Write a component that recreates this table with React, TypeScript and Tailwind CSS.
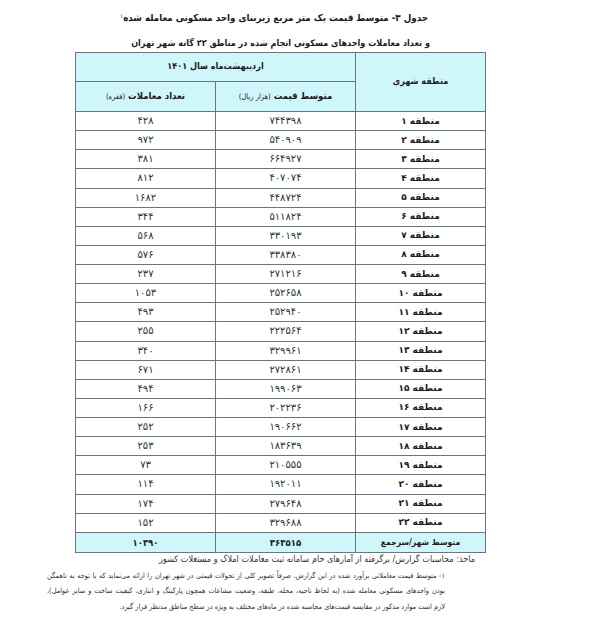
import React from "react";

const rows: [string, string, string][] = [
  ["۱", "۷۴۴۳۹۸", "۴۲۸"],
  ["۲", "۵۴۰۹۰۹", "۹۷۲"],
  ["۳", "۶۶۴۹۲۷", "۳۸۱"],
  ["۴", "۴۰۷۰۷۴", "۸۱۲"],
  ["۵", "۴۴۸۷۲۴", "۱۶۸۲"],
  ["۶", "۵۱۱۸۲۴", "۳۴۴"],
  ["۷", "۳۳۰۱۹۳", "۵۶۸"],
  ["۸", "۳۳۸۳۸۰", "۵۷۶"],
  ["۹", "۲۷۱۲۱۶", "۲۳۷"],
  ["۱۰", "۲۵۲۶۵۸", "۱۰۵۳"],
  ["۱۱", "۲۵۲۹۴۰", "۴۹۳"],
  ["۱۲", "۲۲۲۵۶۴", "۲۵۵"],
  ["۱۳", "۳۲۹۹۶۱", "۳۴۰"],
  ["۱۴", "۲۷۲۸۶۱", "۶۷۱"],
  ["۱۵", "۱۹۹۰۶۳", "۴۹۴"],
  ["۱۶", "۲۰۲۲۳۶", "۱۶۶"],
  ["۱۷", "۱۹۰۶۶۲", "۲۵۲"],
  ["۱۸", "۱۸۳۶۳۹", "۲۵۳"],
  ["۱۹", "۲۱۰۵۵۵", "۷۳"],
  ["۲۰", "۱۹۲۰۱۱", "۱۱۴"],
  ["۲۱", "۲۷۹۶۴۸", "۱۷۴"],
  ["۲۲", "۳۲۹۶۸۸", "۱۵۲"],
];

const cond = "font-['DejaVu_Sans_Condensed','DejaVu_Sans',sans-serif] font-stretch-condensed";
const reg = "font-['DejaVu_Sans',sans-serif]";
const bd = "border border-[#6a7679]";

export default function App() {
  return (
    <div dir="rtl" className={`w-[589px] h-[640px] bg-white text-[#1c1c1c] overflow-hidden ${reg}`}>
      <div className={`pt-[10px] pr-[161px] text-[9.7px] font-bold leading-[16px] whitespace-nowrap ${cond}`}>
        جدول ۳- متوسط قیمت یک متر مربع زیربنای واحد مسکونی معامله شده
        <sup className="text-[6px] font-normal">۱</sup>
      </div>
      <div className={`pt-[9px] pr-[159px] text-[9px] font-bold leading-[16px] whitespace-nowrap ${cond}`}>
        و تعداد معاملات واحدهای مسکونی انجام شده در مناطق ۲۲ گانه شهر تهران
      </div>
      <div className="mt-[1px] mr-[103px] w-[410px]">
        <table className={`w-[410px] border-collapse table-fixed ${bd}`}>
          <colgroup>
            <col className="w-[130px]" />
            <col className="w-[140px]" />
            <col className="w-[140px]" />
          </colgroup>
          <thead className={cond}>
            <tr className="h-[29px] bg-[#cff6fb]">
              <th rowSpan={2} className={`${bd} text-[9px] font-bold text-center`}>
                منطقه شهری
              </th>
              <th colSpan={2} className={`${bd} text-[9px] font-bold text-center`}>
                اردیبهشت‌ماه سال ۱۴۰۱
              </th>
            </tr>
            <tr className="h-[30px] bg-[#cff6fb]">
              <th className={`${bd} text-[9.5px] font-bold text-center`}>
                متوسط قیمت <span className="font-normal text-[7.5px]">(هزار ریال)</span>
              </th>
              <th className={`${bd} text-[9.5px] font-bold text-center`}>
                تعداد معاملات <span className="font-normal text-[7.5px]">(فقره)</span>
              </th>
            </tr>
          </thead>
          <tbody>
            {rows.map(([n, p, c]) => (
              <tr key={n} className="h-[19.14px]">
                <td className={`${bd} text-[9px] font-bold text-center leading-none`}>منطقه {n}</td>
                <td className={`${bd} text-[10px] text-center leading-none text-[#333]`}>{p}</td>
                <td className={`${bd} text-[10px] text-center leading-none text-[#333]`}>{c}</td>
              </tr>
            ))}
            <tr className={`h-[20px] bg-[#cff6fb] ${cond}`}>
              <td className={`${bd} text-[8.5px] font-bold text-center leading-none`}>متوسط شهر/سرجمع</td>
              <td className={`${bd} text-[9.5px] font-bold text-center leading-none`}>۳۶۳۵۱۵</td>
              <td className={`${bd} text-[9.5px] font-bold text-center leading-none`}>۱۰۴۹۰</td>
            </tr>
          </tbody>
        </table>
      </div>
      <div className={`pr-[114px] text-[9px] leading-[12px] text-[#333] whitespace-nowrap ${cond}`}>
        ماخذ: محاسبات گزارش/ برگرفته از آمارهای خام سامانه ثبت معاملات املاک و مستغلات کشور
      </div>
      <div className={`mt-[3px] mr-[144px] w-[398px] text-[7.3px] leading-[15.5px] text-[#333] ${cond}`}>
        <div className="whitespace-nowrap text-justify [text-align-last:justify]">
          ۱- متوسط قیمت معاملاتی برآورد شده در این گزارش، صرفاً تصویر کلی از تحولات قیمتی در شهر تهران را ارائه می‌نماید که با توجه به ناهمگن
        </div>
        <div className="whitespace-nowrap text-justify [text-align-last:justify]">
          بودن واحدهای مسکونی معامله شده (به لحاظ ناحیه، محله، طبقه، وضعیت مشاعات همچون پارکینگ و انباری، کیفیت ساخت و سایر عوامل)،
        </div>
        <div className="whitespace-nowrap">
          لازم است موارد مذکور در مقایسه قیمت‌های محاسبه شده در ماه‌های مختلف به ویژه در سطح مناطق مدنظر قرار گیرد.
        </div>
      </div>
    </div>
  );
}
